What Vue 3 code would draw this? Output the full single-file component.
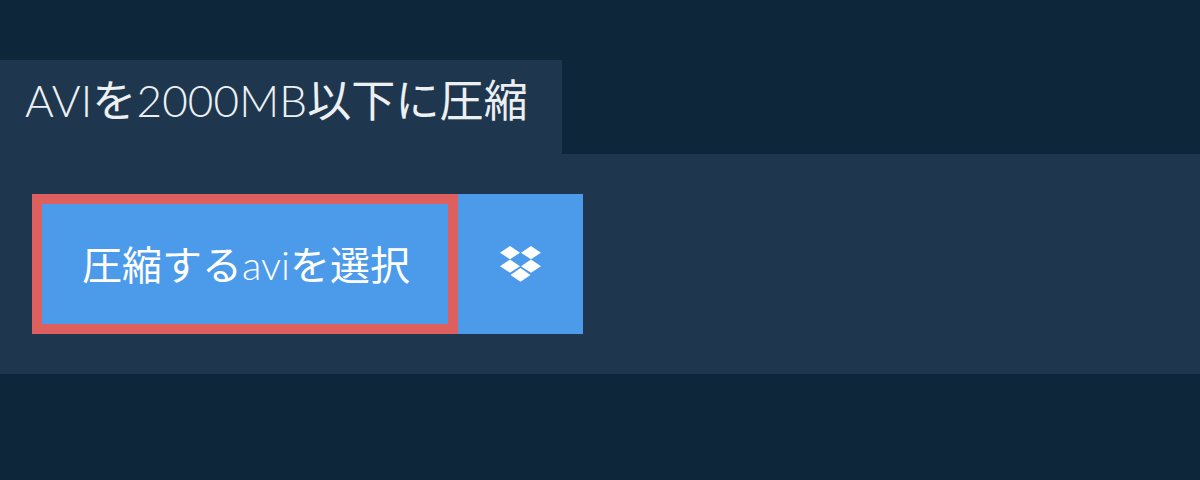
<script setup>
</script>

<template>
  <div class="page">
    <h1 class="tab">AVIを2000MB以下に圧縮</h1>
    <div class="panel">
      <div class="actions">
        <button class="select">圧縮するaviを選択</button>
        <button class="dropbox" aria-label="Dropbox">
          <svg width="41" height="36" viewBox="0 0 41 36"><path fill="#fff" d="M10 0 20 6.700 10 13.300 0 6.700zM31 0 41 6.700 31 13.300 21 6.700zM10 13.500 20 20.200 10 26.800 0 20.200zM31 13.500 41 20.200 31 26.800 21 20.200zM20.500 22 30.500 29 20.500 35.800 10.500 29z"/></svg>
        </button>
      </div>
    </div>
  </div>
</template>

<style scoped>
.page { width: 1200px; height: 480px; background: #0e2639; padding-top: 60px; box-sizing: border-box; font-family: "Lato Light", Lato, "Noto Sans CJK JP", sans-serif; }
.tab { margin: 0; width: 562px; height: 94px; box-sizing: border-box; padding: 13px 0 0 25px; background: #1f374e; color: #ecf0f3; font-size: 44px; line-height: 54px; font-weight: 400; letter-spacing: 0.14px; }
.panel { height: 220px; background: #1f374e; padding: 40px 32px; box-sizing: border-box; }
.actions { display: flex; height: 140px; }
.select { width: 426px; height: 140px; background: #4c9aea; border: 10px solid #de605e; color: #fff; font-family: "Lato Light", Lato, "Noto Sans CJK JP", sans-serif; font-size: 40px; font-weight: 400; padding: 0 0 2px 2px; }
.dropbox { width: 125px; height: 140px; background: #4c9aea; border: 0; padding: 0; display: flex; align-items: center; justify-content: center; }
</style>
